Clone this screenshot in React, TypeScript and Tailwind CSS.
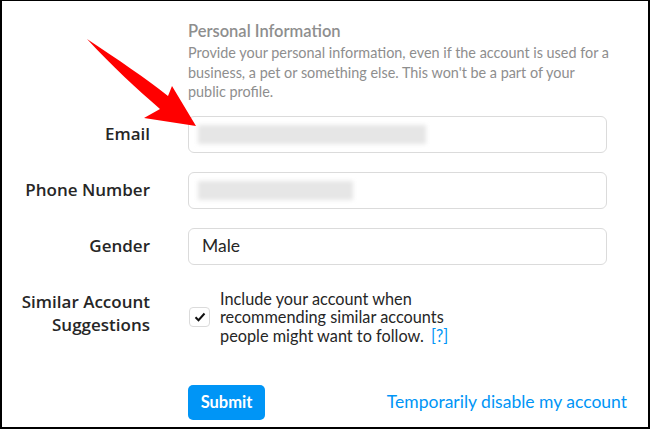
import React from 'react';

const Arrow: React.FC = () => (
  <svg className="absolute left-0 top-0 pointer-events-none" width="650" height="429" viewBox="0 0 650 429">
    <path
      d="M85 38 C 115 58, 145 78, 166 95 L 170 85 L 194 125 L 142 117 L 158 108 C 135 88, 110 65, 85 38 Z"
      fill="#ff0000"
    />
  </svg>
);

interface FieldProps {
  label: string;
  children: React.ReactNode;
}

const Field: React.FC<FieldProps> = ({ label, children }) => (
  <div className="flex items-center">
    <div className="w-[148px] text-right font-['Open_Sans',sans-serif] text-[17px] font-semibold text-[#262626]">
      {label}
    </div>
    <div className="ml-[38px] w-[419px] h-[37px] border border-[#dbdbdb] rounded-[6px] flex items-center px-[9px]">
      {children}
    </div>
  </div>
);

const App: React.FC = () => {
  return (
    <div className="relative w-[650px] h-[429px] bg-white border-black border-l-2 border-r-2 border-b-2 border-t overflow-hidden font-['Lato',sans-serif]">
      <div className="pt-[20px]">
        {/* intro */}
        <div className="ml-[186px]">
          <h2 className="text-[16.5px] leading-[21px] font-semibold text-[#8e8e8e]">Personal Information</h2>
          <p className="mt-px text-[14.4px] leading-[19.5px] text-[#8e8e8e]">
            Provide your personal information, even if the account is used for a
            <br />
            business, a pet or something else. This won't be a part of your
            <br />
            public profile.
          </p>
        </div>

        <div className="mt-[14px] flex flex-col gap-[19px]">
          <Field label="Email">
            <div className="w-[228px] h-[19px] bg-[#e6e6e6] blur-[2px]" />
          </Field>
          <Field label="Phone Number">
            <div className="w-[155px] h-[19px] bg-[#e6e6e6] blur-[2px]" />
          </Field>
          <Field label="Gender">
            <span className="pl-[4px] text-[17.5px] text-[#262626]">Male</span>
          </Field>
        </div>

        {/* similar accounts */}
        <div className="mt-[25px] flex items-start">
          <div className="w-[148px] text-right font-['Open_Sans',sans-serif] text-[17px] leading-[23px] font-semibold text-[#262626]">
            Similar Account
            <br />
            Suggestions
          </div>
          <div className="ml-[38px] flex items-center">
            <div className="w-[21px] h-[20px] ml-[1px] border border-[#dbdbdb] rounded-[4px] flex items-center justify-center">
              <svg width="12" height="10" viewBox="0 0 12 10">
                <path d="M1.5 5.2 L4.5 8.2 L10.5 1.5" fill="none" stroke="#111" strokeWidth="2" />
              </svg>
            </div>
            <div className="ml-[10px] text-[16.3px] leading-[18.5px] text-[#262626]">
              Include your account when
              <br />
              recommending similar accounts
              <br />
              people might want to follow. <span className="ml-[3px] text-[#0095f6]">[?]</span>
            </div>
          </div>
        </div>

        {/* actions */}
        <div className="mt-[40px] flex items-center ml-[186px] w-[439px] justify-between">
          <button className="w-[77px] h-[35px] rounded-[5px] bg-[#0095f6] text-white text-[16.5px] font-bold">
            Submit
          </button>
          <a className="text-[17.5px] text-[#0095f6]">Temporarily disable my account</a>
        </div>
      </div>
      <Arrow />
    </div>
  );
};

export default App;
